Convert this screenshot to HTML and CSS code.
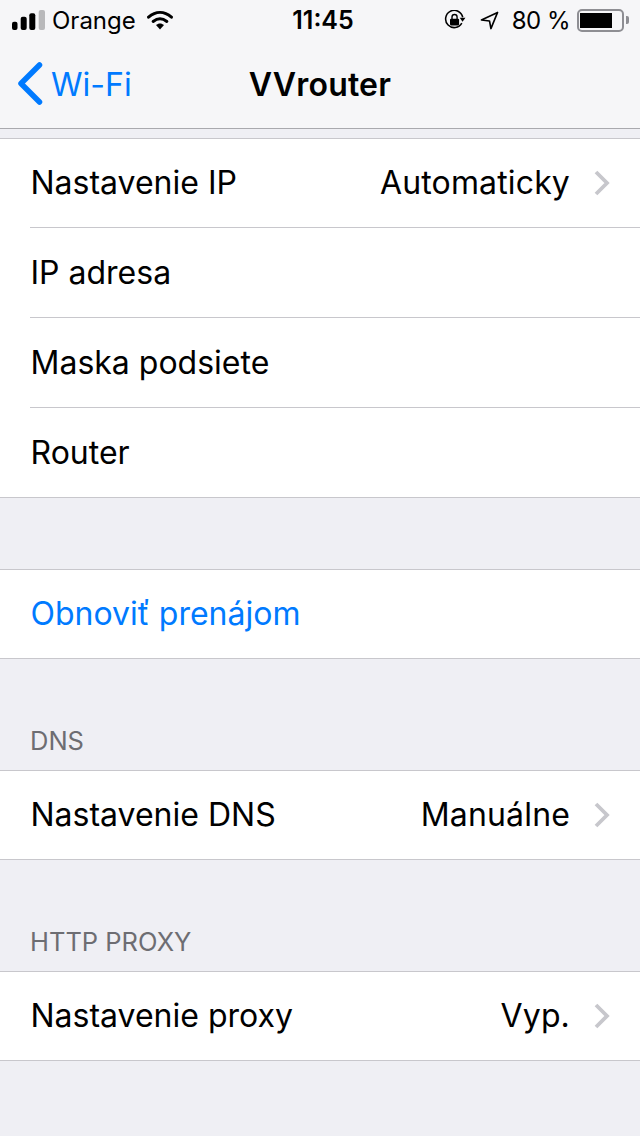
FILE: index.html
```html
<!DOCTYPE html>
<html lang="sk">
<head>
  <meta charset="UTF-8">
  <title>VVrouter</title>
  <meta name="viewport" content="width=device-width, initial-scale=1">
  <link rel="stylesheet" href="styles.css">
</head>
<body>
  <header class="top">
    <div class="status">
      <div class="status-left">
        <svg class="signal" width="33" height="20" viewBox="0 0 33 20">
          <rect x="0" y="11.700" width="5.500" height="8.300" rx="2" fill="#000"/>
          <rect x="8.700" y="6.700" width="6" height="13.300" rx="2" fill="#000"/>
          <rect x="17.300" y="3.300" width="6" height="16.700" rx="2" fill="#000"/>
          <rect x="26.700" y="0" width="6.300" height="20" rx="2" fill="#b9b9bb"/>
        </svg>
        <span class="carrier">Orange</span>
        <svg class="wifi" width="28" height="20" viewBox="0 0 28 21">
          <path d="M2 7.500C9.500 1 18.500 1 26 7.500" fill="none" stroke="#000" stroke-width="3.200" stroke-linecap="round"/>
          <path d="M6.800 12C11.300 8.500 16.700 8.500 21.200 12" fill="none" stroke="#000" stroke-width="3.200" stroke-linecap="round"/>
          <path d="M9.800 15.800C12.300 13.600 15.700 13.600 18.200 15.800L14 20.500Z" fill="#000"/>
        </svg>
      </div>
      <div class="clock">11:45</div>
      <div class="status-right">
        <svg class="lock" width="22" height="20" viewBox="0 0 24 22">
          <path d="M19.500 14.500A9.500 9.500 0 1 1 20.500 8" fill="none" stroke="#000" stroke-width="1.700"/>
          <path d="M17.200 8.500L23.500 8.500L20.300 13Z" fill="#000"/>
          <rect x="6.500" y="9.500" width="10" height="7.500" rx="1.200" fill="#000"/>
          <path d="M8.700 10V7.800A2.800 2.800 0 0 1 14.300 7.800V10" fill="none" stroke="#000" stroke-width="1.500"/>
        </svg>
        <svg class="arrow" width="19" height="19" viewBox="0 0 20 20">
          <path d="M18.500 1.500L1.500 9.500L10 10.500L11.500 18.500Z" fill="none" stroke="#000" stroke-width="1.700" stroke-linejoin="round"/>
        </svg>
        <span class="battery-text">80 %</span>
        <div class="battery">
          <div class="battery-body"><div class="battery-fill"></div></div>
          <div class="battery-tip"></div>
        </div>
      </div>
    </div>
    <nav class="nav">
      <a class="back">
        <svg width="26" height="44" viewBox="0 0 26 44">
          <path d="M22.500 3L4 21.500L22.500 40" fill="none" stroke="#007aff" stroke-width="5.500" stroke-linecap="round" stroke-linejoin="round"/>
        </svg>
        <span>Wi-Fi</span>
      </a>
      <h1 class="title">VVrouter</h1>
    </nav>
  </header>

  <main>
    <section class="group first">
      <div class="row">
        <span class="label">Nastavenie IP</span>
        <span class="value">Automaticky</span>
        <svg class="chevron" width="16" height="26" viewBox="0 0 16 26"><path d="M2 2L13 13L2 24" fill="none" stroke="#c7c7cc" stroke-width="3.800"/></svg>
      </div>
      <div class="row"><span class="label">IP adresa</span></div>
      <div class="row"><span class="label">Maska podsiete</span></div>
      <div class="row"><span class="label">Router</span></div>
    </section>

    <section class="group renew">
      <div class="row"><span class="label link">Obnoviť prenájom</span></div>
    </section>

    <h2 class="group-title">DNS</h2>
    <section class="group">
      <div class="row">
        <span class="label">Nastavenie DNS</span>
        <span class="value">Manuálne</span>
        <svg class="chevron" width="16" height="26" viewBox="0 0 16 26"><path d="M2 2L13 13L2 24" fill="none" stroke="#c7c7cc" stroke-width="3.800"/></svg>
      </div>
    </section>

    <h2 class="group-title">HTTP PROXY</h2>
    <section class="group">
      <div class="row">
        <span class="label">Nastavenie proxy</span>
        <span class="value">Vyp.</span>
        <svg class="chevron" width="16" height="26" viewBox="0 0 16 26"><path d="M2 2L13 13L2 24" fill="none" stroke="#c7c7cc" stroke-width="3.800"/></svg>
      </div>
    </section>
  </main>
</body>
</html>
```

FILE: styles.css
```css
html, body {
  margin: 0;
  padding: 0;
}

body {
  width: 640px;
  height: 1136px;
  overflow: hidden;
  background-color: #efeff4;
  color: #000;
  font-family: 'Inter', 'Liberation Sans', sans-serif;
}

.top {
  height: 128px;
  background-color: #f6f6f8;
  border-bottom: 1px solid #a9a9ae;
}

.status {
  height: 40px;
  padding: 0 11px 0 12px;
  display: grid;
  grid-template-columns: 1fr auto 1fr;
  align-items: center;
  font-size: 24px;
}

.status-left {
  display: flex;
  align-items: center;
}

.signal {
  margin-right: 7px;
}

.wifi {
  margin-left: 10px;
}

.clock {
  margin-left: 5px;
  font-size: 25px;
  font-weight: 600;
}

.status-right {
  display: flex;
  align-items: center;
  justify-content: flex-end;
}

.arrow {
  margin-left: 14px;
}

.battery-text {
  margin-left: 13px;
  letter-spacing: -0.5px;
}

.battery {
  margin-left: 7px;
  display: flex;
  align-items: center;
}

.battery-body {
  width: 47px;
  height: 23px;
  padding: 2px 1px;
  border: 2px solid #8e8e93;
  border-radius: 5px;
  box-sizing: border-box;
}

.battery-fill {
  width: 32px;
  height: 100%;
  background-color: #000;
}

.battery-tip {
  width: 3px;
  height: 8px;
  margin-left: 2px;
  background-color: #8e8e93;
  border-radius: 0 2px 2px 0;
}

.nav {
  position: relative;
  height: 88px;
  display: flex;
  align-items: center;
  justify-content: center;
}

.back {
  position: absolute;
  left: 17px;
  top: 22px;
  display: flex;
  align-items: center;
  gap: 8px;
  color: #007aff;
  font-size: 32px;
}

.title {
  margin: 0;
  font-size: 32px;
  font-weight: 600;
  letter-spacing: 0.2px;
}

.group {
  background-color: #fff;
  border-top: 1px solid #c8c7cc;
  border-bottom: 1px solid #c8c7cc;
}

.group.first {
  margin-top: 9px;
}

.group.renew {
  margin-top: 71px;
}

/* height includes the 1px separator on every row but the first */
.row {
  height: 90px;
  margin-left: 30px;
  padding-right: 30px;
  box-sizing: border-box;
  display: flex;
  align-items: center;
  font-size: 32px;
  border-top: 1px solid #c8c7cc;
}

.group .row:first-child {
  height: 88px;
  padding-bottom: 2px;
  border-top: none;
}

.group .row:first-child .chevron {
  margin-top: 2px;
}

.label {
  flex: 1;
  margin-left: 0.500px;
}

.link {
  color: #007aff;
}

.value {
  margin-right: 24px;
  letter-spacing: 0.15px;
}

.group-title {
  margin: 0;
  height: 111px;
  padding-left: 30px;
  padding-bottom: 14px;
  box-sizing: border-box;
  display: flex;
  align-items: flex-end;
  font-size: 25.500px;
  font-weight: 400;
  color: #6d6d72;
}
```
